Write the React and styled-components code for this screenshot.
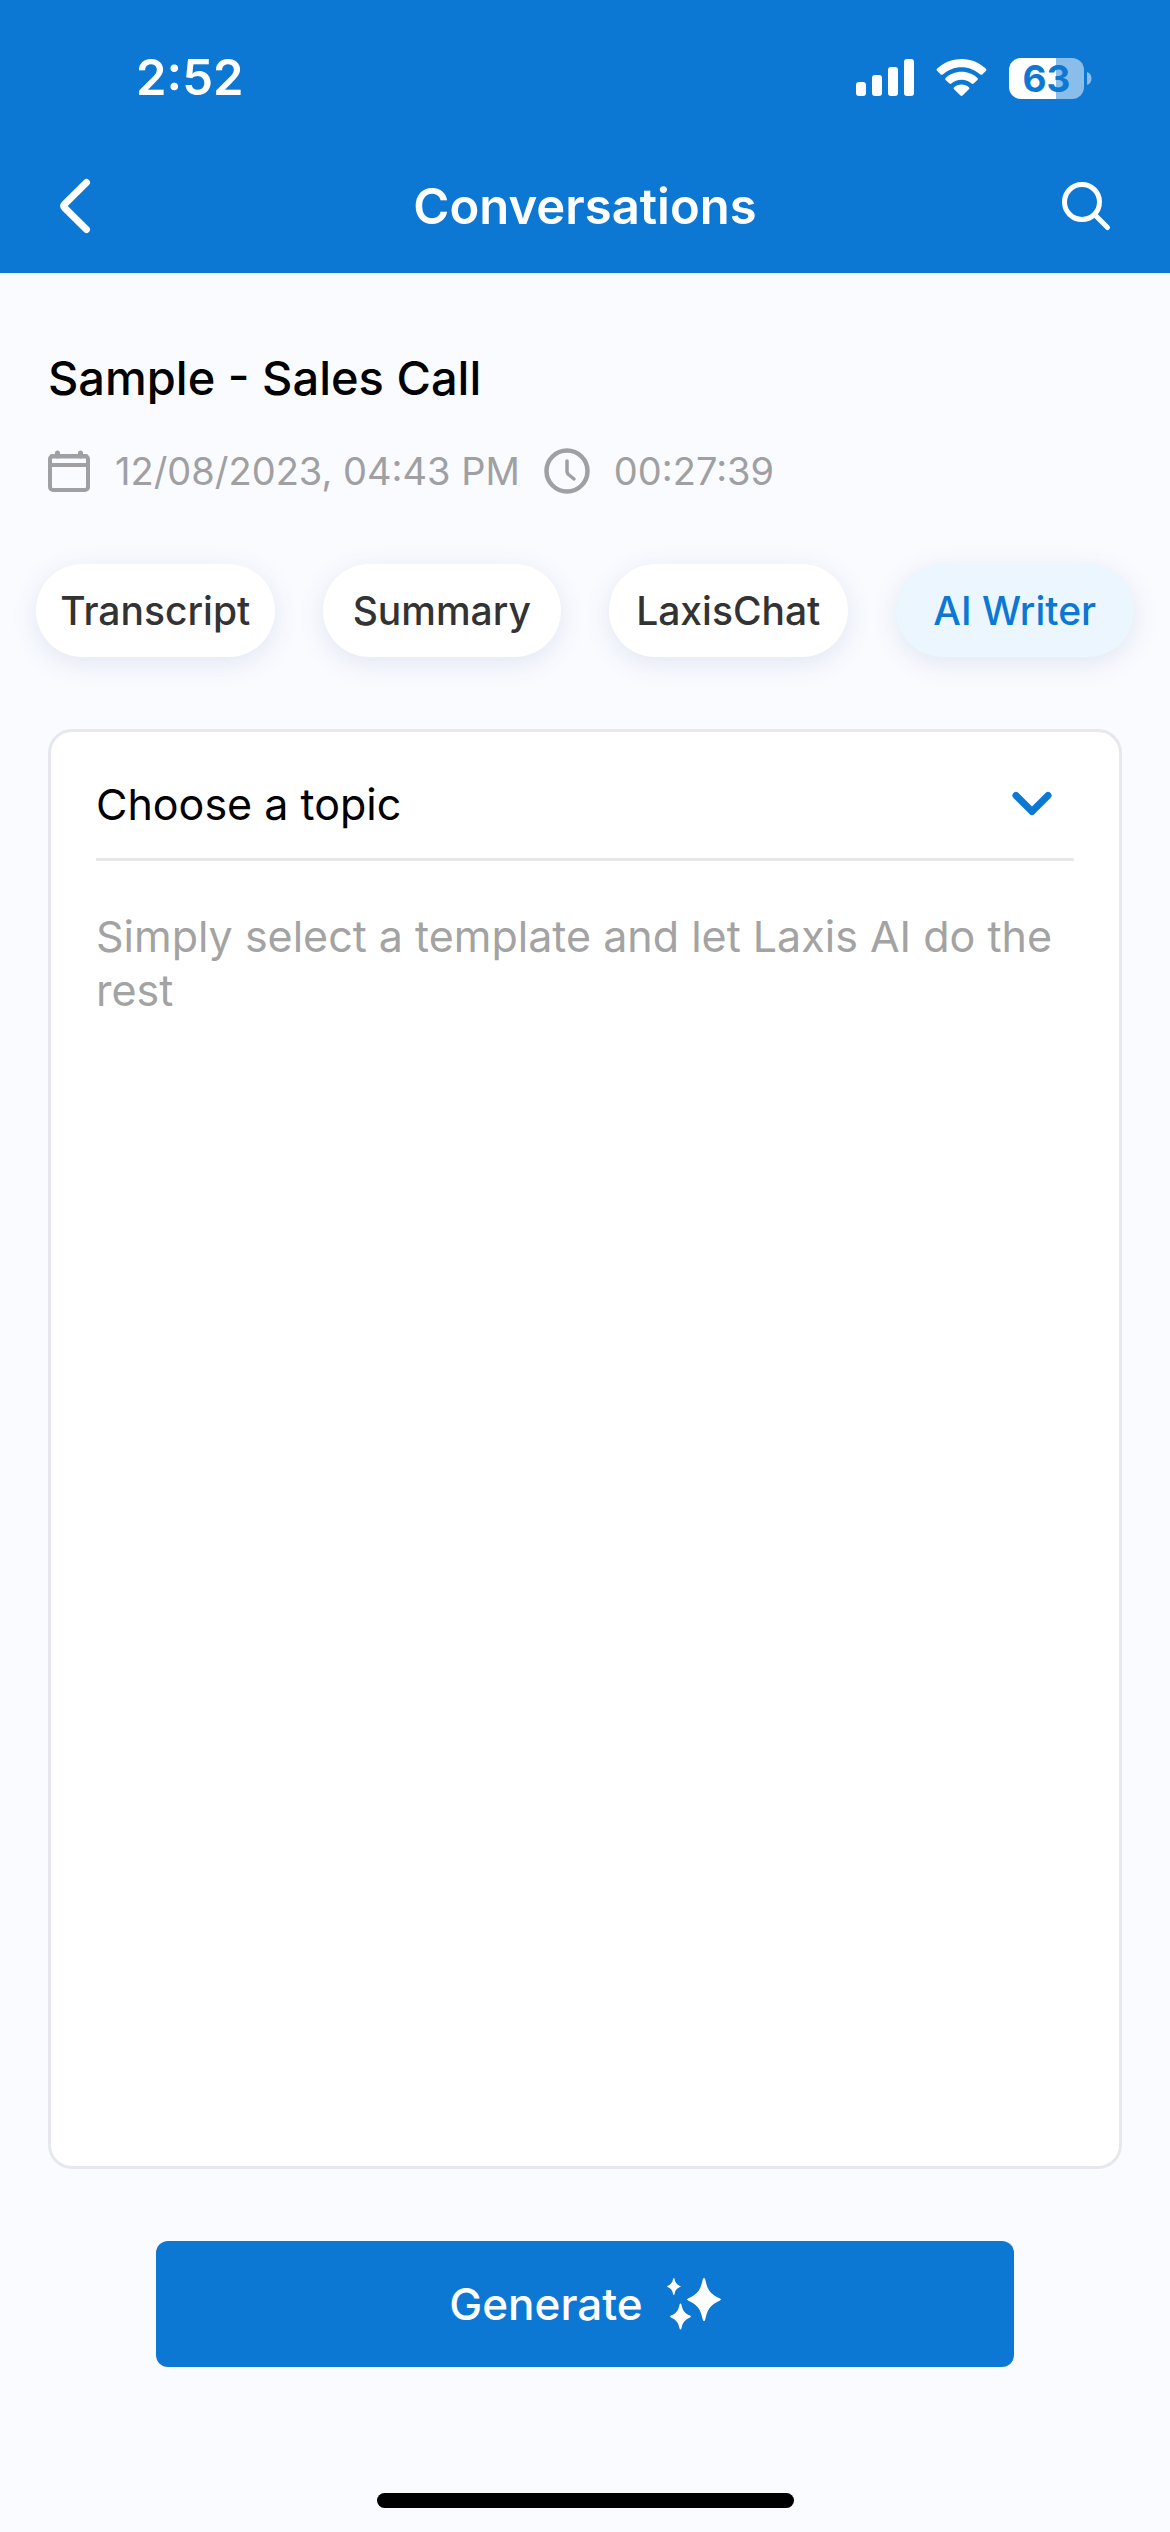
import * as React from "react"
import styled, { createGlobalStyle } from "styled-components"

const GlobalStyle = createGlobalStyle`
    * {
        box-sizing: border-box;
    }

    body {
        margin: 0;
        background: #f9fbff;
        font-family: Inter, "Liberation Sans", sans-serif;
    }

    button, select {
        font-family: inherit;
        border: none;
        padding: 0;
        cursor: pointer;
    }

    svg {
        display: block;
    }
`

const Page = styled.div`
    display: flex;
    flex-direction: column;
    min-height: 100vh;
`

const Header = styled.header`
    background: #0c78d3;
    color: #ffffff;
`

const StatusBar = styled.div`
    display: flex;
    align-items: center;
    justify-content: space-between;
    height: 156px;
    padding: 0 78px 0 136px;
`

const Time = styled.time`
    font-size: 49px;
    font-weight: 600;
    line-height: 60px;
`

const StatusIcons = styled.div`
    display: flex;
    align-items: center;
    gap: 22px;
`

const Battery = styled.div`
    display: flex;
    align-items: center;
    gap: 3px;
`

const BatteryLevel = styled.span`
    width: 75px;
    border-radius: 12px;
    background: linear-gradient(to right, #ffffff 63%, #8bbdea 63%);
    color: #0c78d3;
    font-size: 37px;
    font-weight: 700;
    line-height: 41px;
    text-align: center;
`

const NavBar = styled.nav`
    display: grid;
    grid-template-columns: 60px 1fr 60px;
    align-items: center;
    height: 117px;
    padding: 0 54px 15px;
`

const NavTitle = styled.h1`
    margin: 0;
    font-size: 49px;
    font-weight: 600;
    line-height: 60px;
    text-align: center;
`

const NavButton = styled.button`
    display: flex;
    justify-content: ${props => props.$end ? `flex-end` : `flex-start`};
    background: none;
    color: inherit;
`

const Details = styled.section`
    padding: 75px 48px 0;
`

const CallTitle = styled.h2`
    margin: 0;
    color: #000000;
    font-size: 47px;
    font-weight: 500;
    line-height: 60px;
`

const Meta = styled.div`
    display: flex;
    align-items: center;
    gap: 24px;
    margin-top: 39px;
    color: #a0a0a3;
    font-size: 38px;
    line-height: 48px;
`

const MetaItem = styled.span`
    display: flex;
    align-items: center;
    gap: 24px;
`

const Tabs = styled.div`
    display: grid;
    grid-template-columns: repeat(4, 1fr);
    gap: 48px;
    padding: 69px 36px 72px;
`

const Tab = styled.button`
    height: 93px;
    border-radius: 48px;
    background: ${props => props.$active ? `#ebf6ff` : `#ffffff`};
    color: ${props => props.$active ? `#0c78d3` : `#333333`};
    box-shadow: 0 6px 27px rgba(70, 80, 150, 0.12);
    font-size: 39px;
    font-weight: 500;
    line-height: 48px;
    white-space: nowrap;
`

const Card = styled.section`
    flex: 1;
    margin: 0 48px;
    padding: 0 45px;
    background: #ffffff;
    border: 3px solid #e7e8ed;
    border-radius: 24px;
`

const TopicField = styled.label`
    display: grid;
    grid-template-columns: 1fr 62px;
    align-items: center;
    height: 129px;
    padding-top: 18px;
    border-bottom: 3px solid #e7e7ee;

    select {
        grid-area: 1 / 1 / 2 / 3;
        width: 100%;
        height: 90px;
        appearance: none;
        background: none;
        color: #000000;
        font-size: 43px;
        line-height: 54px;
    }

    svg {
        grid-area: 1 / 2 / 2 / 3;
        pointer-events: none;
    }
`

const Hint = styled.p`
    margin: 48px 0 0;
    color: #a3a3a3;
    font-size: 43px;
    line-height: 54px;
`

const Generate = styled.button`
    display: flex;
    align-items: center;
    justify-content: center;
    gap: 24px;
    height: 126px;
    margin: 72px 156px 0;
    border-radius: 12px;
    background: #0c78d3;
    color: #ffffff;
    font-size: 44px;
    font-weight: 500;
    line-height: 54px;
`

const HomeBar = styled.div`
    width: 417px;
    height: 15px;
    margin: 126px auto 24px;
    border-radius: 8px;
    background: #000000;
`

const SignalIcon = () => (
    <svg width="58" height="38" viewBox="0 0 58 38" fill="currentColor" aria-hidden="true">
        <rect x="0" y="23" width="10" height="14" rx="3" />
        <rect x="16" y="16" width="10" height="21" rx="3" />
        <rect x="32" y="8" width="10" height="29" rx="3" />
        <rect x="48" y="0" width="10" height="37" rx="3" />
    </svg>
)

const WifiIcon = () => (
    <svg width="51" height="38" viewBox="0 0 51 38" fill="currentColor" aria-hidden="true">
        <path d="M25.5 0C35 0 43.500 3.700 50 9.800C50.600 10.400 50.600 11.200 50 11.800L46.300 15.400C45.700 16 44.900 16 44.300 15.500C39.200 10.800 32.700 8.200 25.500 8.200S11.800 10.800 6.700 15.500C6.100 16 5.300 16 4.700 15.400L1 11.800C0.400 11.200 0.400 10.400 1 9.800C7.500 3.700 16 0 25.500 0Z" />
        <path d="M25.500 12.800C31.600 12.800 37.200 15.100 41.400 19C42 19.600 42 20.400 41.400 21L37.600 24.600C37 25.200 36.300 25.100 35.700 24.600C32.900 22.200 29.400 20.800 25.500 20.800S18.100 22.200 15.300 24.600C14.700 25.100 14 25.200 13.400 24.600L9.600 21C9 20.400 9 19.600 9.600 19C13.800 15.100 19.400 12.800 25.500 12.800Z" />
        <path d="M25.500 25.600C28.300 25.600 30.900 26.600 32.900 28.300C33.500 28.800 33.500 29.600 32.900 30.200L26.500 36.500C25.900 37.100 25.100 37.100 24.500 36.500L18.100 30.200C17.500 29.600 17.500 28.800 18.100 28.300C20.100 26.600 22.700 25.600 25.500 25.600Z" />
    </svg>
)

const BatteryTip = () => (
    <svg width="5" height="13" viewBox="0 0 5 13" fill="#8bbdea" aria-hidden="true">
        <path d="M0 0C3 1 4.500 3.500 4.500 6.500S3 12 0 13Z" />
    </svg>
)

const BackIcon = () => (
    <svg width="42" height="60" viewBox="0 0 42 60" fill="none" stroke="currentColor" strokeWidth="7" strokeLinecap="round" strokeLinejoin="round" aria-hidden="true">
        <path d="M32.500 5.500L10.500 27.200Q8.700 29 10.500 30.800L32.500 52.500" />
    </svg>
)

const SearchIcon = () => (
    <svg width="60" height="60" viewBox="0 0 60 60" fill="none" stroke="currentColor" strokeWidth="5" strokeLinecap="round" aria-hidden="true">
        <circle cx="26" cy="25" r="17.500" />
        <path d="M39 38L51.500 50.500" />
    </svg>
)

const CalendarIcon = () => (
    <svg width="43" height="43" viewBox="0 0 43 43" fill="none" stroke="currentColor" aria-hidden="true">
        <rect x="2" y="6" width="38" height="34" rx="3" strokeWidth="4" />
        <path d="M2 6.500H40M2 15H40" strokeWidth="4" />
        <path d="M9.500 3V6M32.500 3V6" strokeWidth="5" strokeLinecap="round" />
    </svg>
)

const ClockIcon = () => (
    <svg width="46" height="46" viewBox="0 0 46 46" fill="none" stroke="currentColor" strokeLinecap="round" strokeLinejoin="round" aria-hidden="true">
        <circle cx="23" cy="23" r="20.500" strokeWidth="4.500" />
        <path d="M23 13V23Q23 25 24.500 26.500L30 31" strokeWidth="3.500" />
    </svg>
)

const ChevronIcon = () => (
    <svg width="40" height="26" viewBox="0 0 40 26" fill="none" stroke="#0c78d3" strokeWidth="7" strokeLinecap="round" strokeLinejoin="round" aria-hidden="true">
        <path d="M4 4.500L20 20.500L36 4.500" />
    </svg>
)

const SparkleIcon = () => (
    <svg width="54" height="52" viewBox="0 0 54 52" fill="currentColor" aria-hidden="true">
        <path d="M37 0C37.600 0 38 0.400 38.200 1.200C40.500 11.500 42.500 15.500 52.500 20.300C54.500 21.200 54.500 21.800 52.500 22.700C42.500 27.500 40.500 31.500 38.200 41.800C38 42.600 37.600 43 37 43S36 42.600 35.800 41.800C33.500 31.500 31.500 27.500 21.500 22.700C19.500 21.800 19.500 21.200 21.500 20.300C31.500 15.500 33.500 11.500 35.800 1.200C36 0.400 36.400 0 37 0Z" />
        <path d="M13.500 25.500C14 25.500 14.300 25.900 14.400 26.400C15.600 32.300 17.300 34.900 23 37.600C24.300 38.200 24.300 38.800 23 39.400C17.300 42.100 15.600 44.700 14.400 50.600C14.300 51.100 14 51.500 13.500 51.500S12.700 51.100 12.600 50.600C11.400 44.700 9.700 42.100 4 39.400C2.700 38.800 2.700 38.200 4 37.600C9.700 34.900 11.400 32.300 12.600 26.400C12.700 25.900 13 25.500 13.500 25.500Z" />
        <path d="M6.800 0C7.200 0 7.400 0.300 7.500 0.700C8.100 4.300 9.500 6.300 13 7.900C14 8.300 14 8.700 13 9.100C9.500 10.700 8.100 12.700 7.500 16.300C7.400 16.700 7.200 17 6.800 17S6.200 16.700 6.100 16.300C5.500 12.700 4.100 10.700 0.600 9.100C-0.200 8.700 -0.200 8.300 0.600 7.900C4.100 6.300 5.500 4.300 6.100 0.700C6.200 0.300 6.400 0 6.800 0Z" />
    </svg>
)

const tabs = ["Transcript", "Summary", "LaxisChat", "AI Writer"]

const App = () => {
    const [active, setActive] = React.useState("AI Writer")

return (
    <>
    <GlobalStyle />
    <Page>
        <Header>
            <StatusBar>
                <Time>2:52</Time>
                <StatusIcons>
                    <SignalIcon />
                    <WifiIcon />
                    <Battery>
                        <BatteryLevel>63</BatteryLevel>
                        <BatteryTip />
                    </Battery>
                </StatusIcons>
            </StatusBar>
            <NavBar>
                <NavButton aria-label="Back">
                    <BackIcon />
                </NavButton>
                <NavTitle>Conversations</NavTitle>
                <NavButton $end aria-label="Search">
                    <SearchIcon />
                </NavButton>
            </NavBar>
        </Header>
        <Details>
            <CallTitle>Sample - Sales Call</CallTitle>
            <Meta>
                <MetaItem>
                    <CalendarIcon />
                    12/08/2023, 04:43 PM
                </MetaItem>
                <MetaItem>
                    <ClockIcon />
                    00:27:39
                </MetaItem>
            </Meta>
        </Details>
        <Tabs>
            {tabs.map(tab => (
                <Tab key={tab} $active={tab === active} onClick={() => setActive(tab)}>
                    {tab}
                </Tab>
            ))}
        </Tabs>
        <Card>
            <TopicField>
                <select aria-label="Topic">
                    <option>Choose a topic</option>
                </select>
                <ChevronIcon />
            </TopicField>
            <Hint>Simply select a template and let Laxis AI do the rest</Hint>
        </Card>
        <Generate>
            Generate
            <SparkleIcon />
        </Generate>
        <HomeBar />
    </Page>
    </>
)
}

export default App
